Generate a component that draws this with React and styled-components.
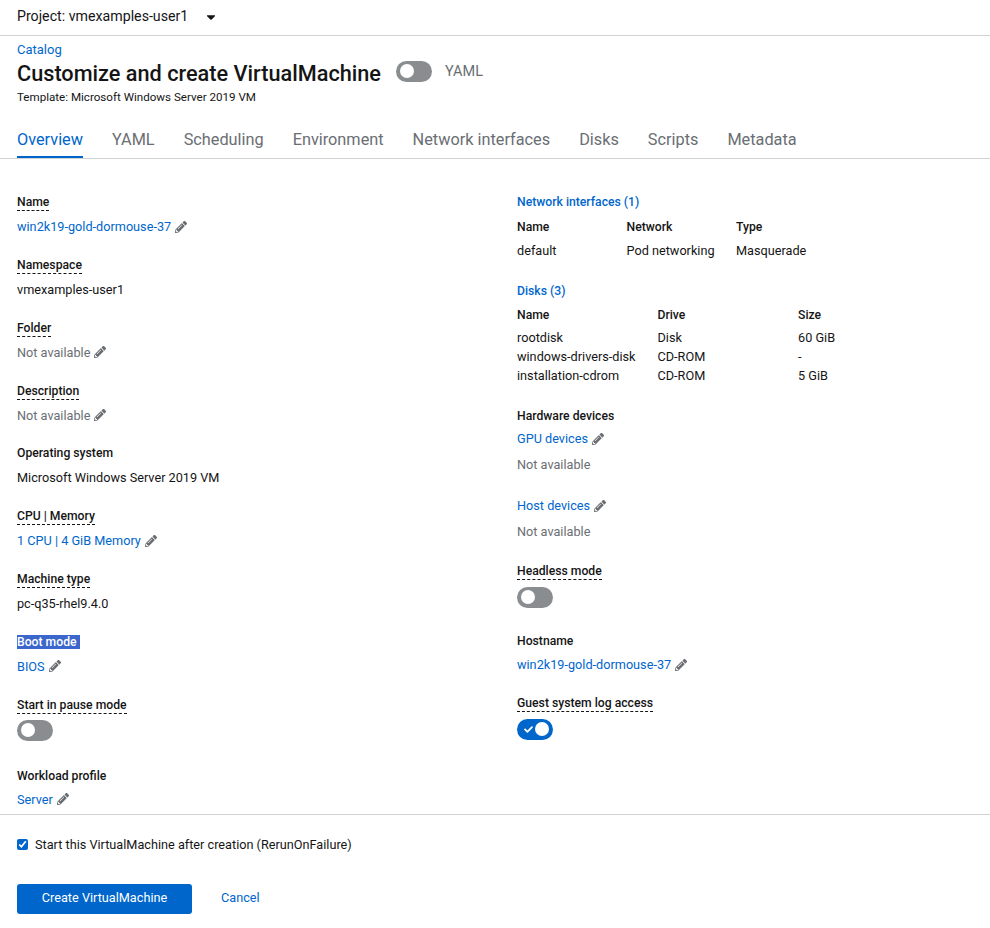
import React from "react";
import styled, { createGlobalStyle } from "styled-components";
import { FaPencilAlt, FaCaretDown, FaCheck } from "react-icons/fa";

const blue = "#0066cc";
const grey = "#6a6e73";

const GlobalStyle = createGlobalStyle`
    html, body {
        margin: 0;
        padding: 0;
        background: #fff;
    }
    body {
        font-family: Roboto, "Liberation Sans", sans-serif;
        font-size: 12.7px;
        line-height: 21px;
        color: #151515;
    }
`

const Page = styled.div`
    width: 990px;
    height: 928px;
    display: flex;
    flex-direction: column;
    overflow: hidden;
`
const ProjectBar = styled.div`
    flex: none;
    display: flex;
    align-items: center;
    gap: 16px;
    padding: 0 0 2px 17px;
    height: 33px;
    font-size: 14.2px;
    border-bottom: 1px solid #d2d2d2;
    svg {
        font-size: 14px;
    }
`
const Header = styled.div`
    flex: none;
    padding: 4px 17px 0;
`
const Crumb = styled.a`
    display: block;
    color: ${blue};
    font-size: 13px;
    line-height: 19px;
`
const TitleRow = styled.div`
    display: flex;
    align-items: center;
    height: 28px;
`
const Title = styled.h1`
    margin: 0 15px 0 0;
    font-size: 21.7px;
    font-weight: 500;
    color: #151515;
`
const TitleSwitch = styled.div`
    display: flex;
    align-items: center;
    gap: 13px;
    margin-bottom: 4px;
`
const YamlLabel = styled.span`
    font-size: 14.5px;
    padding-top: 1px;
    color: ${grey};
`
const TemplateLine = styled.div`
    font-size: 11.6px;
    line-height: 18px;
    margin-top: 1px;
`
const Tabs = styled.div`
    flex: none;
    display: flex;
    gap: 29px;
    margin-top: 12px;
    padding: 0 17px;
    height: 40px;
    border-bottom: 1px solid #d2d2d2;
`
const Tab = styled.div`
    font-size: 16.3px;
    line-height: 38px;
    height: 40px;
    padding-top: 3px;
    box-sizing: border-box;
    color: ${(p) => (p.$active ? blue : grey)};
    border-bottom: ${(p) => (p.$active ? `2px solid ${blue}` : "none")};
`
const Body = styled.div`
    flex: 1;
    min-height: 0;
    overflow: hidden;
    display: grid;
    grid-template-columns: 500px 1fr;
    padding: 33px 0 0 17px;
`
const Column = styled.div`
    display: flex;
    flex-direction: column;
`
const Field = styled.div`
    margin-bottom: ${(p) => p.$mb ?? 17.85}px;
`
const Label = styled.div`
    font-size: 12.2px;
    line-height: 21px;
    font-weight: 500;
    margin-bottom: ${(p) => p.$mb ?? 3}px;
`
const Dashed = styled.span`
    padding-bottom: 1px;
    border-bottom: 1px dashed #151515;
`
const Selected = styled.span`
    background: #3b66cc;
    color: #fff;
    padding-right: 3px;
`
const Value = styled.div`
    color: ${(p) => (p.$muted ? grey : "#151515")};
    line-height: 21px;
`
const EditLink = styled.span`
    display: inline-flex;
    align-items: center;
    gap: 4px;
    color: ${(p) => (p.$muted ? grey : blue)};
    svg {
        font-size: 12px;
        color: ${grey};
    }
`
const SwitchTrack = styled.span`
    display: block;
    width: 36px;
    height: 21px;
    margin-top: ${(p) => p.$mt ?? 0}px;
    border-radius: 11px;
    position: relative;
    background: ${(p) => (p.$on ? blue : "#8a8d90")};
    color: #fff;
    svg {
        position: absolute;
        left: 7px;
        top: 6px;
        font-size: 9px;
    }
    &::after {
        content: "";
        position: absolute;
        top: 3px;
        left: ${(p) => (p.$on ? "18px" : "4px")};
        width: 14px;
        height: 14px;
        border-radius: 50%;
        background: #fff;
    }
`
const SectionLink = styled.div`
    color: ${blue};
    font-size: 12.2px;
    font-weight: 500;
    line-height: 21px;
    margin-bottom: ${(p) => p.$mb ?? 4}px;
`
const Table = styled.div`
    display: grid;
    grid-template-columns: repeat(3, ${(p) => p.$col}px);
    margin-bottom: 21px;
    line-height: 19px;
    white-space: nowrap;
`
const TableHead = styled.div`
    font-size: 12.2px;
    font-weight: 500;
    line-height: 20px;
    margin-bottom: ${(p) => p.$mb ?? 3}px;
`
const Footer = styled.div`
    flex: none;
    height: 114px;
    box-sizing: border-box;
    border-top: 1px solid #d2d2d2;
    padding: 19px 17px 0;
`
const CheckRow = styled.label`
    display: flex;
    align-items: center;
    gap: 7px;
    height: 21px;
`
const CheckBox = styled.input`
    width: 11px;
    height: 11px;
    margin: 0;
    accent-color: ${blue};
`
const Actions = styled.div`
    display: flex;
    align-items: center;
    gap: 29px;
    margin-top: 29px;
`
const PrimaryButton = styled.button`
    width: 175px;
    height: 30px;
    padding: 0 0 3px;
    border: none;
    border-radius: 3px;
    background: ${blue};
    color: #fff;
    font: inherit;
`
const CancelLink = styled.a`
    margin-bottom: 4px;
    color: ${blue};
`

const Edit = ({ children, muted }) => (
    <EditLink $muted={muted}>
        {children} <FaPencilAlt />
    </EditLink>
)

const LeftColumn = () => (
    <Column>
        <Field>
            <Label><Dashed>Name</Dashed></Label>
            <Value><Edit>win2k19-gold-dormouse-37</Edit></Value>
        </Field>
        <Field>
            <Label><Dashed>Namespace</Dashed></Label>
            <Value>vmexamples-user1</Value>
        </Field>
        <Field>
            <Label><Dashed>Folder</Dashed></Label>
            <Value><Edit muted>Not available</Edit></Value>
        </Field>
        <Field>
            <Label><Dashed>Description</Dashed></Label>
            <Value><Edit muted>Not available</Edit></Value>
        </Field>
        <Field>
            <Label>Operating system</Label>
            <Value>Microsoft Windows Server 2019 VM</Value>
        </Field>
        <Field>
            <Label><Dashed>CPU | Memory</Dashed></Label>
            <Value><Edit>1 CPU | 4 GiB Memory</Edit></Value>
        </Field>
        <Field>
            <Label><Dashed>Machine type</Dashed></Label>
            <Value>pc-q35-rhel9.4.0</Value>
        </Field>
        <Field>
            <Label><Selected>Boot mode</Selected></Label>
            <Value><Edit>BIOS</Edit></Value>
        </Field>
        <Field $mb={25}>
            <Label><Dashed>Start in pause mode</Dashed></Label>
            <SwitchTrack $mt={4} />
        </Field>
        <Field>
            <Label $mb={2}>Workload profile</Label>
            <Value><Edit>Server</Edit></Value>
        </Field>
    </Column>
)

const RightColumn = () => (
    <Column>
        <SectionLink>Network interfaces (1)</SectionLink>
        <Table $col={109.5}>
            <TableHead $mb={4}>Name</TableHead>
            <TableHead $mb={4}>Network</TableHead>
            <TableHead $mb={4}>Type</TableHead>
            <div>default</div>
            <div>Pod networking</div>
            <div>Masquerade</div>
        </Table>
        <SectionLink $mb={3}>Disks (3)</SectionLink>
        <Table $col={140.5}>
            <TableHead>Name</TableHead>
            <TableHead>Drive</TableHead>
            <TableHead>Size</TableHead>
            <div>rootdisk</div>
            <div>Disk</div>
            <div>60 GiB</div>
            <div>windows-drivers-disk</div>
            <div>CD-ROM</div>
            <div>-</div>
            <div>installation-cdrom</div>
            <div>CD-ROM</div>
            <div>5 GiB</div>
        </Table>
        <Label $mb={1}>Hardware devices</Label>
        <Field $mb={5}><Value><Edit>GPU devices</Edit></Value></Field>
        <Field $mb={20}><Value $muted>Not available</Value></Field>
        <Field $mb={5}><Value><Edit>Host devices</Edit></Value></Field>
        <Field $mb={19}><Value $muted>Not available</Value></Field>
        <Field $mb={23}>
            <Label><Dashed>Headless mode</Dashed></Label>
            <SwitchTrack $mt={5} />
        </Field>
        <Field $mb={18}>
            <Label $mb={2}>Hostname</Label>
            <Value><Edit>win2k19-gold-dormouse-37</Edit></Value>
        </Field>
        <Field>
            <Label><Dashed>Guest system log access</Dashed></Label>
            <SwitchTrack $mt={5} $on><FaCheck /></SwitchTrack>
        </Field>
    </Column>
)

const tabs = ["Overview", "YAML", "Scheduling", "Environment", "Network interfaces", "Disks", "Scripts", "Metadata"]

export default function App() {
    return (
        <Page>
            <GlobalStyle />
            <ProjectBar>
                <span>Project: vmexamples-user1</span>
                <FaCaretDown />
            </ProjectBar>
            <Header>
                <Crumb>Catalog</Crumb>
                <TitleRow>
                    <Title>Customize and create VirtualMachine</Title>
                    <TitleSwitch>
                        <SwitchTrack />
                        <YamlLabel>YAML</YamlLabel>
                    </TitleSwitch>
                </TitleRow>
                <TemplateLine>Template: Microsoft Windows Server 2019 VM</TemplateLine>
            </Header>
            <Tabs>
                {tabs.map((t, i) => <Tab key={t} $active={i === 0}>{t}</Tab>)}
            </Tabs>
            <Body>
                <LeftColumn />
                <RightColumn />
            </Body>
            <Footer>
                <CheckRow>
                    <CheckBox type="checkbox" defaultChecked />
                    Start this VirtualMachine after creation (RerunOnFailure)
                </CheckRow>
                <Actions>
                    <PrimaryButton>Create VirtualMachine</PrimaryButton>
                    <CancelLink>Cancel</CancelLink>
                </Actions>
            </Footer>
        </Page>
    )
}
